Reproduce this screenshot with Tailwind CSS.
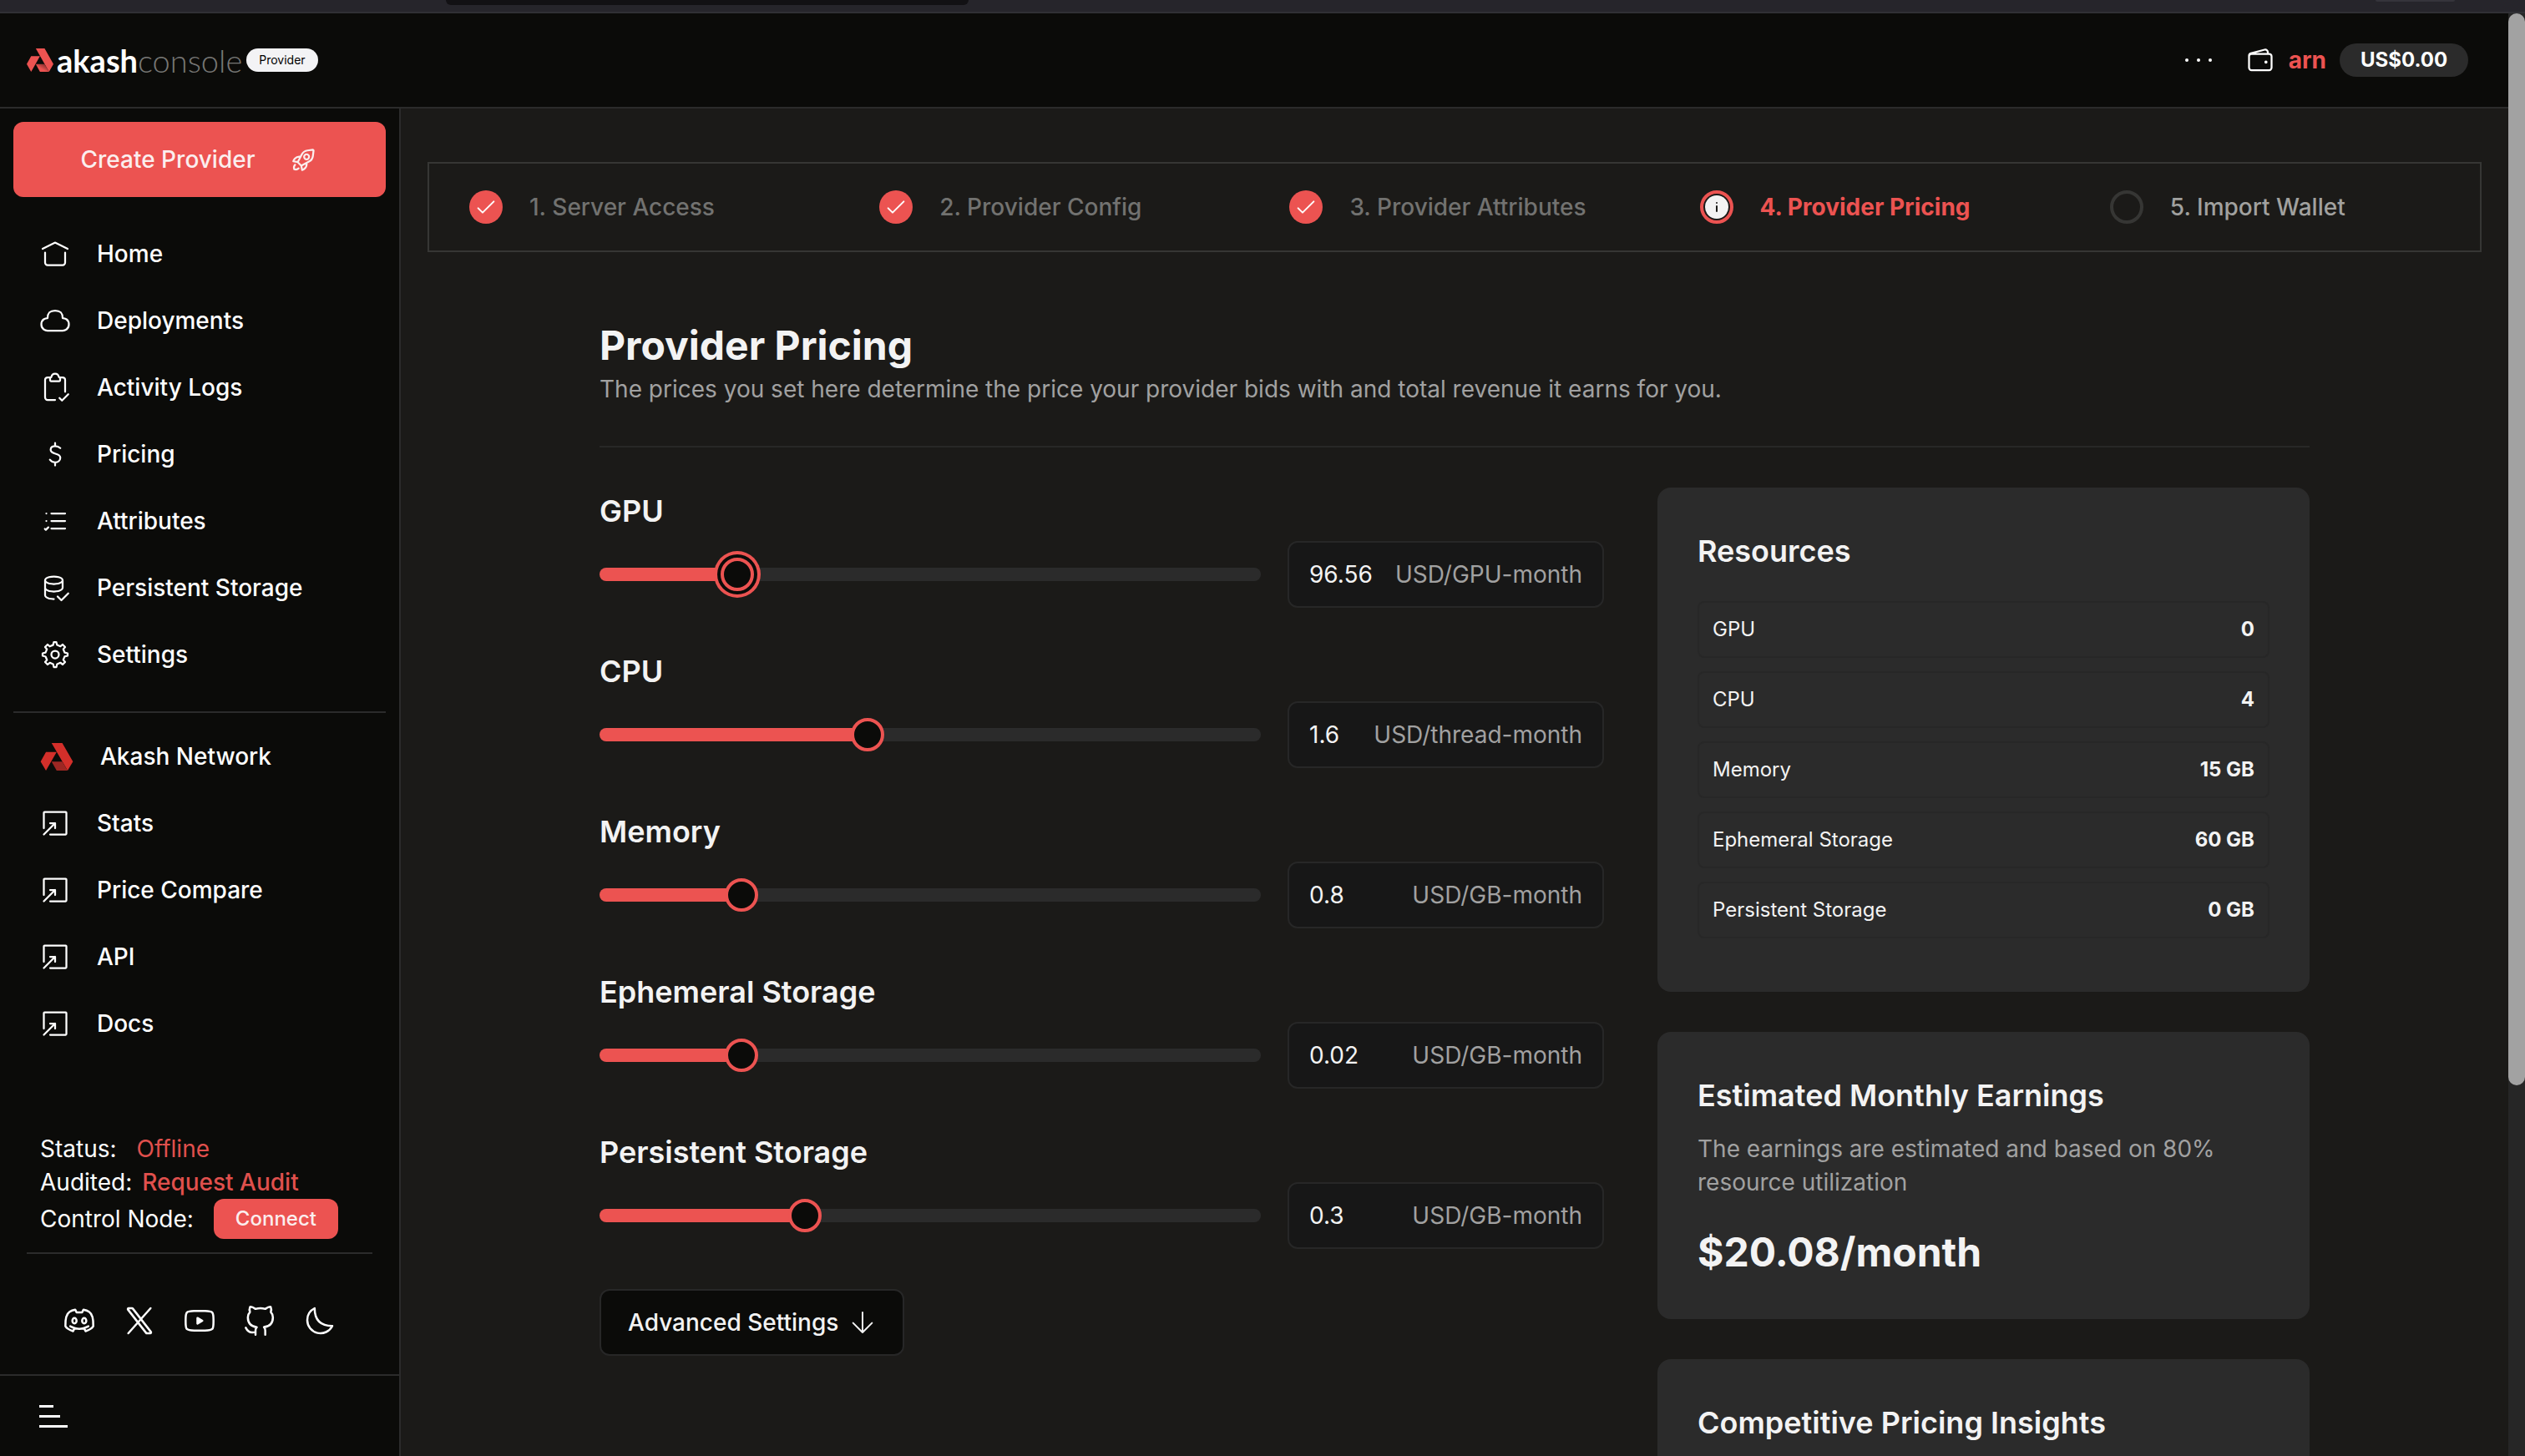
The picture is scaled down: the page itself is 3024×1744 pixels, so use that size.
<!DOCTYPE html>
<html lang="en">
<head>
<meta charset="utf-8">
<title>Akash Console - Provider Pricing</title>
<script src="https://cdn.jsdelivr.net/npm/@tailwindcss/browser@4"></script>
</head>
<body class="flex h-screen flex-col overflow-hidden bg-[#1b1a18] font-['Inter',sans-serif] text-[28px] leading-10 text-[#f3f3f3]">

<svg class="hidden" aria-hidden="true">
  <symbol id="home" viewBox="0 0 24 24"><path d="M2 8l9.732-4.866a.6.6 0 01.536 0L22 8M20 11v8a2 2 0 01-2 2H6a2 2 0 01-2-2v-8"/></symbol>
  <symbol id="cloud" viewBox="0 0 24 24"><path d="M12 4C6 4 6 8 6 10c-1.667 0-5 1-5 5s3.333 5 5 5h12c1.667 0 5-1 5-5s-3.333-5-5-5c0-2 0-6-6-6z"/></symbol>
  <symbol id="clipboard" viewBox="0 0 24 24"><path d="M8.5 4H6a2 2 0 00-2 2v14a2 2 0 002 2h6M15.5 4H18a2 2 0 012 2v9.5M15.5 20.5l2 2 5-5M8 6.4V4.5a.5.5 0 01.5-.5c.276 0 .504-.224.552-.496C9.2 2.652 9.774 1 12 1s2.8 1.652 2.948 2.504c.048.272.276.496.552.496a.5.5 0 01.5.5v1.9a.6.6 0 01-.6.6H8.6a.6.6 0 01-.6-.6z"/></symbol>
  <symbol id="dollar" viewBox="0 0 24 24"><path d="M16.154 7.154C15.154 6.154 13.63 5.52 12 5.505M7.846 16.462c.948 1.264 2.566 2.054 4.154 2.054M12 5.505c-1.876-.018-3.577.78-3.577 3.033 0 4.154 7.731 2.077 7.731 6.231 0 2.37-2.026 3.747-4.154 3.747M12 5.505V3M12 18.516V21"/></symbol>
  <symbol id="list" viewBox="0 0 24 24"><path d="M9 6h11M9 12h11M9 18h11M5 6.01V6M5 12.01V12M3.8 18.3l.8.8 2-2"/></symbol>
  <symbol id="database" viewBox="0 0 24 24"><path d="M4 6v6s0 3 7 3 7-3 7-3V6M11 3c7 0 7 3 7 3s0 3-7 3-7-3-7-3 0-3 7-3zM11 21c-7 0-7-3-7-3v-6M14 19l3 3 5.500-5.500"/></symbol>
  <symbol id="gear" viewBox="0 0 24 24"><path d="M12 15a3 3 0 100-6 3 3 0 000 6z"/><path d="M19.622 10.395l-1.097-2.650L20 6l-2-2-1.735 1.483-2.707-1.113L12.935 2h-1.954l-.632 2.401-2.645 1.115L6 4 4 6l1.453 1.789-1.080 2.657L2 11v2l2.401.656L5.516 16.300 4 18l2 2 1.791-1.460 2.606 1.072L11 22h2l.604-2.387 2.651-1.098C16.697 18.831 18 20 18 20l2-2-1.484-1.750 1.098-2.652L22 12.978V11l-2.378-.605z"/></symbol>
  <symbol id="open" viewBox="0 0 24 24"><path d="M8 21h12.400a.6.6 0 00.6-.6V3.600a.6.6 0 00-.6-.6H3.600a.6.6 0 00-.6.6V16M3 21l9-9M8 12h4v4"/></symbol>
  <symbol id="rocket" viewBox="0 0 24 24"><path transform="rotate(45 12 12)" d="M16.061 10.404L14 17h-4l-2.061-6.596a6 6 0 01.998-5.484l2.590-3.315a.6.6 0 01.946 0l2.590 3.315a6 6 0 01.998 5.484zM10 20c0 2 2 3 2 3s2-1 2-3M8.500 12.500C5 15 7 19 7 19l3-2M15.500 12.500c3.500 2.500 1.500 6.500 1.500 6.500l-3-2M12 11a2 2 0 110-4 2 2 0 010 4z"/></symbol>
  <symbol id="discord" viewBox="0 0 24 24"><path d="M5.500 16c5 2.500 8 2.500 13 0M15.500 17.500l1 2s4.171-1.328 5.500-3.500c0-1 .53-8.147-3-10.500-1.500-1-4-1.500-4-1.500l-1 2h-2M8.528 17.500l-1 2S3.357 18.172 2.028 16c0-1-.53-8.147 3-10.500 1.500-1 4-1.500 4-1.500l1 2h2M8.500 14c-.828 0-1.500-.895-1.500-2s.672-2 1.500-2 1.500.895 1.500 2-.672 2-1.500 2zM15.500 14c-.828 0-1.500-.895-1.500-2s.672-2 1.500-2 1.500.895 1.500 2-.672 2-1.500 2z"/></symbol>
  <symbol id="x" viewBox="0 0 24 24"><path d="M16.820 20.768L3.753 3.968A.6.6 0 014.227 3h2.480a.6.6 0 01.473.232l13.067 16.800a.6.6 0 01-.474.968h-2.480a.6.6 0 01-.473-.232zM20 3L4 21"/></symbol>
  <symbol id="youtube" viewBox="0 0 24 24"><path fill="currentColor" d="M14 12l-3.500 2v-4l3.500 2z"/><path d="M2 12.707v-1.415c0-2.895 0-4.343.905-5.274.906-.932 2.332-.972 5.183-1.053C9.438 4.927 10.818 4.900 12 4.900s2.561.027 3.912.065c2.851.081 4.277.121 5.182 1.053C22 6.949 22 8.397 22 11.292v1.415c0 2.896 0 4.343-.905 5.275-.906.931-2.331.972-5.183 1.052-1.350.039-2.730.066-3.912.066s-2.561-.027-3.912-.066c-2.852-.08-4.277-.12-5.183-1.052C2 17.050 2 15.602 2 12.708z"/></symbol>
  <symbol id="github" viewBox="0 0 24 24"><path d="M16 22.027v-2.870a3.370 3.370 0 00-.94-2.610c3.140-.35 6.440-1.540 6.440-7A5.440 5.440 0 0020 5.797a5.070 5.070 0 00-.09-3.770S18.730 1.677 16 3.507a13.380 13.380 0 00-7 0C6.270 1.677 5.090 2.027 5.090 2.027A5.070 5.070 0 005 5.797a5.440 5.440 0 00-1.500 3.780c0 5.420 3.300 6.610 6.440 7A3.370 3.370 0 009 19.157v2.870M9 20.027c-3 .973-5.500 0-7-3"/></symbol>
  <symbol id="moon" viewBox="0 0 24 24"><path d="M3 11.507a9.493 9.493 0 0018 4.219c-8.507 0-12.726-4.220-12.726-12.726A9.494 9.494 0 003 11.507z"/></symbol>
  <symbol id="wallet" viewBox="0 0 24 24"><path d="M19 20H5a2 2 0 01-2-2V9a2 2 0 012-2h14a2 2 0 012 2v9a2 2 0 01-2 2zM18 7V5.603a2 2 0 00-2.515-1.932l-11 2.933A2 2 0 003 8.537V9"/><path fill="currentColor" d="M16.500 14a.5.5 0 110-1 .5.5 0 010 1z"/></symbol>
  <symbol id="check" viewBox="0 0 24 24"><path d="M5 13l4 4L19 7"/></symbol>
  <symbol id="arrow-down" viewBox="0 0 24 24"><path d="M12 3v18M20.500 12.500L12 21l-8.500-8.500"/></symbol>
  <symbol id="akash" viewBox="147 148 115 98"><path stroke="none" fill="currentColor" d="M186 148h38l38 66-19 32zM166 180h38l-38 66-19-32z"/><path stroke="none" fill="#9d2723" d="M186 214h38l19 32h-39z"/></symbol>
</svg>

<div class="flex h-4 shrink-0 items-start border-b-2 border-[#303035] bg-[#26252b] pr-[84px] pl-[534px]">
  <div class="h-[6px] w-[626px] rounded-b-xl bg-[#121114]"></div>
  <div class="ml-auto h-[2px] w-[95px] rounded-b-sm bg-[#35343b]"></div>
</div>

<div class="flex min-h-0 flex-1">
  <div class="flex min-w-0 flex-1 flex-col">

    <header class="flex h-[114px] shrink-0 items-center justify-between border-b-2 border-[#2b2b2b] bg-[#0b0b09] pr-12 pl-8">
      <a href="#" class="flex items-center">
        <svg class="h-7 w-8" viewBox="147 148 115 98" preserveAspectRatio="none" aria-hidden="true">
          <defs><linearGradient id="fold" x1="0" y1="1" x2="1" y2="0"><stop offset="0.4" stop-color="#ec5351"/><stop offset="1" stop-color="#5a1f1e"/></linearGradient></defs>
          <path fill="#ec5351" d="M186 148h38l38 66-19 32zM166 180h38l-38 66-19-32z"/><path fill="url(#fold)" d="M186 214h38l19 32h-39z"/>
        </svg>
        <span class="ml-1 font-['Lato',sans-serif] text-[38px] leading-10 text-[#777775]"><span class="font-bold text-white">akash</span><span class="font-light">console</span></span>
        <span class="ml-[5px] flex h-7 items-center rounded-full bg-[#f3f3f5] px-[15px] text-sm text-black">Provider</span>
      </a>
      <div class="flex items-center">
        <button type="button" aria-label="More" class="mr-10 flex gap-[10px]">
          <span class="size-1 rounded-full bg-white"></span><span class="size-1 rounded-full bg-white"></span><span class="size-1 rounded-full bg-white"></span>
        </button>
        <svg class="size-9 fill-none stroke-white stroke-[1.5] text-white" stroke-linecap="round" stroke-linejoin="round"><use href="#wallet"/></svg>
        <a href="#" class="ml-4 font-bold text-[#ec5351]">arn</a>
        <span class="ml-4 flex h-10 w-[154px] items-center justify-center rounded-full bg-[#2b2b2b] text-[24px] font-bold text-white">US$0.00</span>
      </div>
    </header>

    <div class="flex min-h-0 flex-1">
      <aside class="flex w-[480px] shrink-0 flex-col border-r-2 border-[#2b2b2b] bg-[#0b0b09] text-white">
        <div class="px-4 pt-4">
          <button type="button" class="flex h-[90px] w-full items-center justify-center gap-10 rounded-xl bg-[#ec5351] font-medium text-[#fbeeee]">Create Provider
            <svg class="size-9 fill-none stroke-current stroke-[1.5]" stroke-linecap="round" stroke-linejoin="round"><use href="#rocket"/></svg></button>
        </div>
        <nav class="mx-4 mt-7 border-b-2 border-[#2b2b2b] pb-7 font-medium">
          <a href="#" class="flex h-20 items-center gap-8 pl-8"><svg class="size-9 fill-none stroke-current stroke-[1.5]" stroke-linecap="round" stroke-linejoin="round"><use href="#home"/></svg>Home</a>
          <a href="#" class="flex h-20 items-center gap-8 pl-8"><svg class="size-9 fill-none stroke-current stroke-[1.5]" stroke-linecap="round" stroke-linejoin="round"><use href="#cloud"/></svg>Deployments</a>
          <a href="#" class="flex h-20 items-center gap-8 pl-8"><svg class="size-9 fill-none stroke-current stroke-[1.5]" stroke-linecap="round" stroke-linejoin="round"><use href="#clipboard"/></svg>Activity Logs</a>
          <a href="#" class="flex h-20 items-center gap-8 pl-8"><svg class="size-9 fill-none stroke-current stroke-[1.5]" stroke-linecap="round" stroke-linejoin="round"><use href="#dollar"/></svg>Pricing</a>
          <a href="#" class="flex h-20 items-center gap-8 pl-8"><svg class="size-9 fill-none stroke-current stroke-[1.5]" stroke-linecap="round" stroke-linejoin="round"><use href="#list"/></svg>Attributes</a>
          <a href="#" class="flex h-20 items-center gap-8 pl-8"><svg class="size-9 fill-none stroke-current stroke-[1.5]" stroke-linecap="round" stroke-linejoin="round"><use href="#database"/></svg>Persistent Storage</a>
          <a href="#" class="flex h-20 items-center gap-8 pl-8"><svg class="size-9 fill-none stroke-current stroke-[1.5]" stroke-linecap="round" stroke-linejoin="round"><use href="#gear"/></svg>Settings</a>
        </nav>
        <nav class="mx-4 mt-3 font-medium">
          <a href="#" class="flex h-20 items-center gap-8 pl-8"><svg class="h-[33px] w-10 text-[#d32f2a]"><use href="#akash"/></svg>Akash Network</a>
          <a href="#" class="flex h-20 items-center gap-8 pl-8"><svg class="size-9 fill-none stroke-current stroke-[1.5]" stroke-linecap="round" stroke-linejoin="round"><use href="#open"/></svg>Stats</a>
          <a href="#" class="flex h-20 items-center gap-8 pl-8"><svg class="size-9 fill-none stroke-current stroke-[1.5]" stroke-linecap="round" stroke-linejoin="round"><use href="#open"/></svg>Price Compare</a>
          <a href="#" class="flex h-20 items-center gap-8 pl-8"><svg class="size-9 fill-none stroke-current stroke-[1.5]" stroke-linecap="round" stroke-linejoin="round"><use href="#open"/></svg>API</a>
          <a href="#" class="flex h-20 items-center gap-8 pl-8"><svg class="size-9 fill-none stroke-current stroke-[1.5]" stroke-linecap="round" stroke-linejoin="round"><use href="#open"/></svg>Docs</a>
        </nav>
        <div class="mx-8 mt-auto border-b-2 border-[#2b2b2b] pb-4 pl-4">
          <p class="flex gap-6">Status: <span class="text-[#e0504d]">Offline</span></p>
          <p class="flex gap-3">Audited: <a href="#" class="font-medium text-[#e0504d]">Request Audit</a></p>
          <p class="flex items-center gap-6">Control Node: <button type="button" class="h-12 w-[149px] rounded-xl bg-[#ec5351] text-[24px] font-medium text-[#fbeeee]">Connect</button></p>
        </div>
        <div class="flex h-36 items-center justify-center gap-8 pt-4">
          <a href="#" aria-label="Discord"><svg class="size-10 fill-none stroke-current stroke-[1.5]" stroke-linecap="round" stroke-linejoin="round"><use href="#discord"/></svg></a>
          <a href="#" aria-label="X"><svg class="size-10 fill-none stroke-current stroke-[1.5]" stroke-linecap="round" stroke-linejoin="round"><use href="#x"/></svg></a>
          <a href="#" aria-label="YouTube"><svg class="size-10 fill-none stroke-current stroke-[1.5]" stroke-linecap="round" stroke-linejoin="round"><use href="#youtube"/></svg></a>
          <a href="#" aria-label="GitHub"><svg class="size-10 fill-none stroke-current stroke-[1.5]" stroke-linecap="round" stroke-linejoin="round"><use href="#github"/></svg></a>
          <button type="button" aria-label="Toggle theme"><svg class="size-10 fill-none stroke-current stroke-[1.5]" stroke-linecap="round" stroke-linejoin="round"><use href="#moon"/></svg></button>
        </div>
        <div class="flex h-[98px] items-center border-t-2 border-[#2b2b2b] pl-[47px]">
          <button type="button" aria-label="Collapse menu" class="flex flex-col items-start gap-[9px]">
            <span class="h-[3px] w-[17px] bg-white"></span><span class="h-[3px] w-[25px] bg-white"></span><span class="h-[3px] w-[34px] bg-white"></span>
          </button>
        </div>
      </aside>

      <main class="min-w-0 flex-1 overflow-hidden px-8 pt-16">
        <ol class="grid h-[108px] grid-cols-5 items-center border-2 border-[#363634] font-medium text-[#727270]">
          <li class="flex items-center gap-8 pl-12"><span class="flex size-10 items-center justify-center rounded-full bg-[#ec5351]"><svg class="size-8 fill-none stroke-white stroke-[1.5]" stroke-linecap="round" stroke-linejoin="round"><use href="#check"/></svg></span>1. Server Access</li>
          <li class="flex items-center gap-8 pl-12"><span class="flex size-10 items-center justify-center rounded-full bg-[#ec5351]"><svg class="size-8 fill-none stroke-white stroke-[1.5]" stroke-linecap="round" stroke-linejoin="round"><use href="#check"/></svg></span>2. Provider Config</li>
          <li class="flex items-center gap-8 pl-12"><span class="flex size-10 items-center justify-center rounded-full bg-[#ec5351]"><svg class="size-8 fill-none stroke-white stroke-[1.5]" stroke-linecap="round" stroke-linejoin="round"><use href="#check"/></svg></span>3. Provider Attributes</li>
          <li class="flex items-center gap-8 pl-12 font-bold text-[#ec5351]" aria-current="step"><span class="flex size-10 items-center justify-center rounded-full border-4 border-[#ec5351]"><svg class="size-7" viewBox="0 0 28 28"><circle cx="14" cy="14" r="14" fill="#f3f3f3"/><path stroke="#1b1a18" stroke-width="2" stroke-linecap="round" d="M14 13v6M14 9v.01"/></svg></span>4. Provider Pricing</li>
          <li class="flex items-center gap-8 pl-12 text-[#a1a19f]"><span class="size-10 rounded-full border-4 border-[#363634]"></span>5. Import Wallet</li>
        </ol>

        <div class="mx-auto mt-20 max-w-[2048px]">
          <h1 class="text-[48px] leading-[64px] font-bold">Provider Pricing</h1>
          <p class="border-b-2 border-[#282827] pb-12 text-[#a1a1a1]">The prices you set here determine the price your provider bids with and total revenue it earns for you.</p>

          <div class="mt-12 grid grid-cols-[1203fr_781fr] items-start gap-16">
            <form class="flex flex-col gap-12">
              <div>
                <label for="gpu" class="block text-[36px] leading-[56px] font-semibold">GPU</label>
                <div class="mt-2 flex items-center gap-8">
                  <input type="range" aria-label="GPU price" min="0" max="500" step="0.01" value="96.56" style="--fill:19.3%" class="h-10 min-w-0 flex-1 appearance-none bg-transparent [&::-webkit-slider-runnable-track]:h-4 [&::-webkit-slider-runnable-track]:rounded-full [&::-webkit-slider-runnable-track]:bg-[linear-gradient(to_right,#ec5351_var(--fill),#2b2b2b_var(--fill))] [&::-webkit-slider-thumb]:-mt-3 [&::-webkit-slider-thumb]:size-10 [&::-webkit-slider-thumb]:appearance-none [&::-webkit-slider-thumb]:rounded-full [&::-webkit-slider-thumb]:border-4 [&::-webkit-slider-thumb]:border-[#ec5351] [&::-webkit-slider-thumb]:bg-[#0b0b09] [&::-webkit-slider-thumb]:shadow-[0_0_0_4px_#0b0b09,0_0_0_8px_#ec5351]">
                  <div class="flex h-20 w-[379px] items-center rounded-xl border-2 border-[#272727] bg-[#171717] px-6"><input id="gpu" type="text" value="96.56" class="w-0 min-w-0 flex-1 bg-transparent"><span class="text-[#a1a1a1]">USD/GPU-month</span></div>
                </div>
              </div>
              <div>
                <label for="cpu" class="block text-[36px] leading-[56px] font-semibold">CPU</label>
                <div class="mt-2 flex items-center gap-8">
                  <input type="range" aria-label="CPU price" min="0" max="4" step="0.01" value="1.6" style="--fill:40%" class="h-10 min-w-0 flex-1 appearance-none bg-transparent [&::-webkit-slider-runnable-track]:h-4 [&::-webkit-slider-runnable-track]:rounded-full [&::-webkit-slider-runnable-track]:bg-[linear-gradient(to_right,#ec5351_var(--fill),#2b2b2b_var(--fill))] [&::-webkit-slider-thumb]:-mt-3 [&::-webkit-slider-thumb]:size-10 [&::-webkit-slider-thumb]:appearance-none [&::-webkit-slider-thumb]:rounded-full [&::-webkit-slider-thumb]:border-4 [&::-webkit-slider-thumb]:border-[#ec5351] [&::-webkit-slider-thumb]:bg-[#0b0b09]">
                  <div class="flex h-20 w-[379px] items-center rounded-xl border-2 border-[#272727] bg-[#171717] px-6"><input id="cpu" type="text" value="1.6" class="w-0 min-w-0 flex-1 bg-transparent"><span class="text-[#a1a1a1]">USD/thread-month</span></div>
                </div>
              </div>
              <div>
                <label for="memory" class="block text-[36px] leading-[56px] font-semibold">Memory</label>
                <div class="mt-2 flex items-center gap-8">
                  <input type="range" aria-label="Memory price" min="0" max="4" step="0.01" value="0.8" style="--fill:20%" class="h-10 min-w-0 flex-1 appearance-none bg-transparent [&::-webkit-slider-runnable-track]:h-4 [&::-webkit-slider-runnable-track]:rounded-full [&::-webkit-slider-runnable-track]:bg-[linear-gradient(to_right,#ec5351_var(--fill),#2b2b2b_var(--fill))] [&::-webkit-slider-thumb]:-mt-3 [&::-webkit-slider-thumb]:size-10 [&::-webkit-slider-thumb]:appearance-none [&::-webkit-slider-thumb]:rounded-full [&::-webkit-slider-thumb]:border-4 [&::-webkit-slider-thumb]:border-[#ec5351] [&::-webkit-slider-thumb]:bg-[#0b0b09]">
                  <div class="flex h-20 w-[379px] items-center rounded-xl border-2 border-[#272727] bg-[#171717] px-6"><input id="memory" type="text" value="0.8" class="w-0 min-w-0 flex-1 bg-transparent"><span class="text-[#a1a1a1]">USD/GB-month</span></div>
                </div>
              </div>
              <div>
                <label for="ephemeral" class="block text-[36px] leading-[56px] font-semibold">Ephemeral Storage</label>
                <div class="mt-2 flex items-center gap-8">
                  <input type="range" aria-label="Ephemeral storage price" min="0" max="0.1" step="0.001" value="0.02" style="--fill:20%" class="h-10 min-w-0 flex-1 appearance-none bg-transparent [&::-webkit-slider-runnable-track]:h-4 [&::-webkit-slider-runnable-track]:rounded-full [&::-webkit-slider-runnable-track]:bg-[linear-gradient(to_right,#ec5351_var(--fill),#2b2b2b_var(--fill))] [&::-webkit-slider-thumb]:-mt-3 [&::-webkit-slider-thumb]:size-10 [&::-webkit-slider-thumb]:appearance-none [&::-webkit-slider-thumb]:rounded-full [&::-webkit-slider-thumb]:border-4 [&::-webkit-slider-thumb]:border-[#ec5351] [&::-webkit-slider-thumb]:bg-[#0b0b09]">
                  <div class="flex h-20 w-[379px] items-center rounded-xl border-2 border-[#272727] bg-[#171717] px-6"><input id="ephemeral" type="text" value="0.02" class="w-0 min-w-0 flex-1 bg-transparent"><span class="text-[#a1a1a1]">USD/GB-month</span></div>
                </div>
              </div>
              <div>
                <label for="persistent" class="block text-[36px] leading-[56px] font-semibold">Persistent Storage</label>
                <div class="mt-2 flex items-center gap-8">
                  <input type="range" aria-label="Persistent storage price" min="0" max="1" step="0.01" value="0.3" style="--fill:30%" class="h-10 min-w-0 flex-1 appearance-none bg-transparent [&::-webkit-slider-runnable-track]:h-4 [&::-webkit-slider-runnable-track]:rounded-full [&::-webkit-slider-runnable-track]:bg-[linear-gradient(to_right,#ec5351_var(--fill),#2b2b2b_var(--fill))] [&::-webkit-slider-thumb]:-mt-3 [&::-webkit-slider-thumb]:size-10 [&::-webkit-slider-thumb]:appearance-none [&::-webkit-slider-thumb]:rounded-full [&::-webkit-slider-thumb]:border-4 [&::-webkit-slider-thumb]:border-[#ec5351] [&::-webkit-slider-thumb]:bg-[#0b0b09]">
                  <div class="flex h-20 w-[379px] items-center rounded-xl border-2 border-[#272727] bg-[#171717] px-6"><input id="persistent" type="text" value="0.3" class="w-0 min-w-0 flex-1 bg-transparent"><span class="text-[#a1a1a1]">USD/GB-month</span></div>
                </div>
              </div>
              <button type="button" class="flex h-20 w-[365px] items-center justify-between self-start rounded-xl border-2 border-[#272727] bg-[#0b0b09] px-8 font-medium">Advanced Settings<svg class="size-8 fill-none stroke-current stroke-[1.5]" stroke-linecap="round" stroke-linejoin="round"><use href="#arrow-down"/></svg></button>
            </form>

            <div class="flex flex-col gap-12">
              <section class="rounded-2xl bg-[#2b2b2b] p-12">
                <h2 class="text-[36px] leading-[56px] font-semibold">Resources</h2>
                <dl class="mt-8 mb-4 flex flex-col gap-4 text-[24px]">
                  <div class="flex h-[68px] items-center justify-between rounded-lg border-2 border-[#272727] px-4"><dt>GPU</dt><dd class="font-bold">0</dd></div>
                  <div class="flex h-[68px] items-center justify-between rounded-lg border-2 border-[#272727] px-4"><dt>CPU</dt><dd class="font-bold">4</dd></div>
                  <div class="flex h-[68px] items-center justify-between rounded-lg border-2 border-[#272727] px-4"><dt>Memory</dt><dd class="font-bold">15 GB</dd></div>
                  <div class="flex h-[68px] items-center justify-between rounded-lg border-2 border-[#272727] px-4"><dt>Ephemeral Storage</dt><dd class="font-bold">60 GB</dd></div>
                  <div class="flex h-[68px] items-center justify-between rounded-lg border-2 border-[#272727] px-4"><dt>Persistent Storage</dt><dd class="font-bold">0 GB</dd></div>
                </dl>
              </section>
              <section class="rounded-2xl bg-[#2b2b2b] p-12">
                <h2 class="text-[36px] leading-[56px] font-semibold">Estimated Monthly Earnings</h2>
                <p class="mt-4 text-[#a1a1a1]">The earnings are estimated and based on 80% resource utilization</p>
                <p class="mt-8 text-[48px] leading-[64px] font-bold">$20.08/month</p>
              </section>
              <section class="rounded-2xl bg-[#2b2b2b] p-12">
                <h2 class="text-[36px] leading-[56px] font-semibold">Competitive Pricing Insights</h2>
              </section>
            </div>
          </div>
        </div>
      </main>
    </div>
  </div>

  <div class="w-5 shrink-0 bg-[#262626]" aria-hidden="true"><div class="h-[1284px] rounded-full bg-[#a2a2a2]"></div></div>
</div>
</body>
</html>
